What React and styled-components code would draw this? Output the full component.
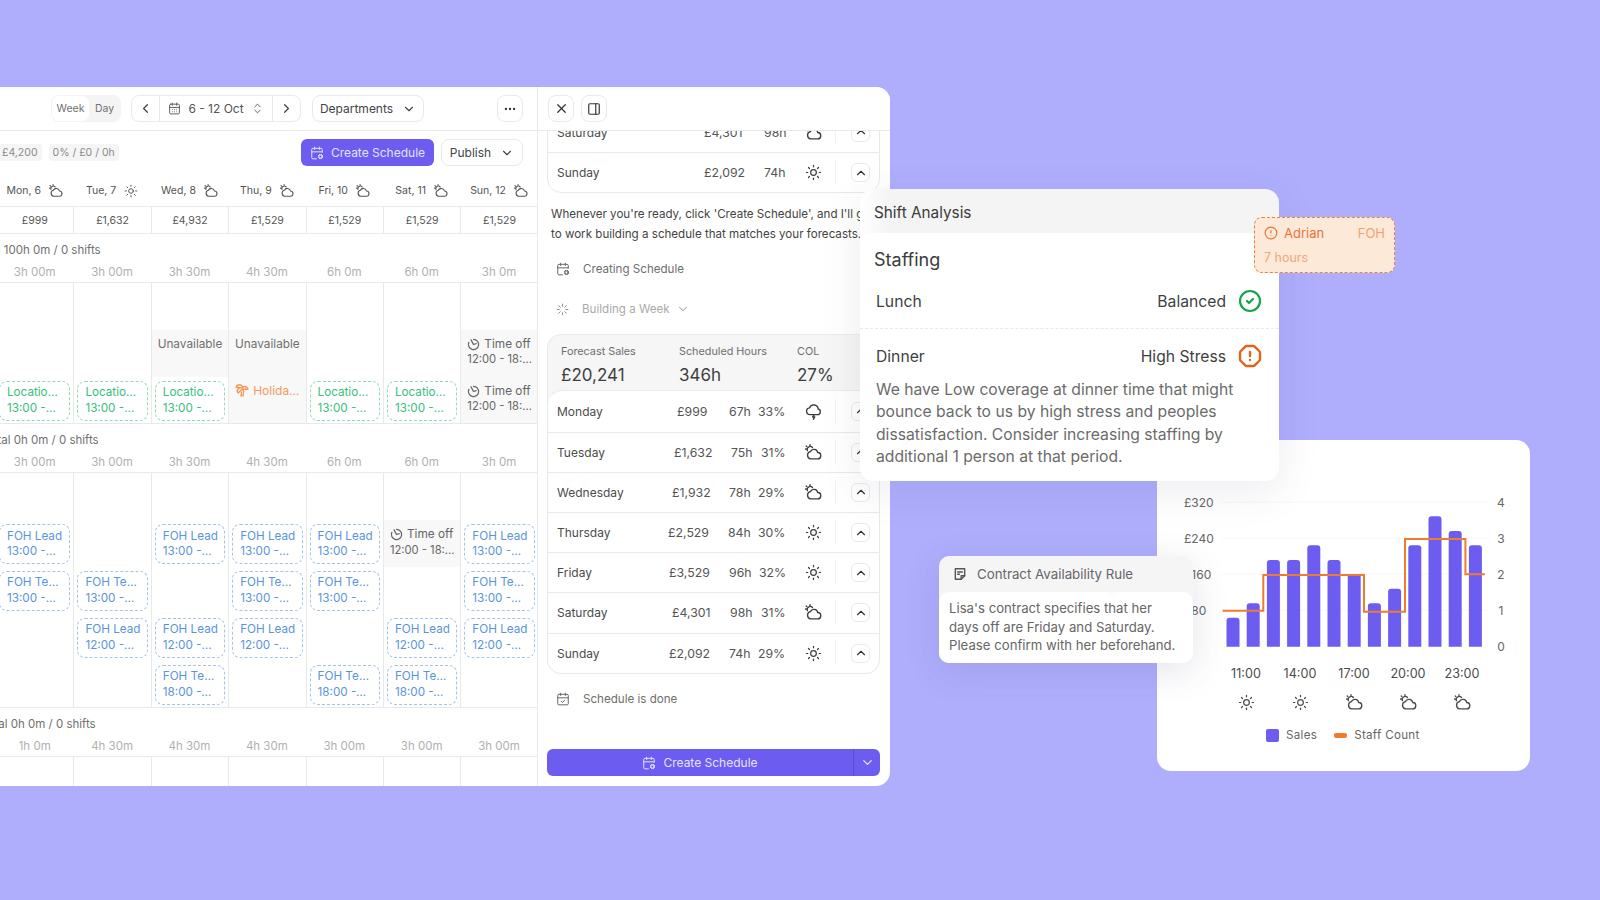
import React from "react";
import styled, { createGlobalStyle } from "styled-components";
import {
  Sun, TreePalm, ChevronUp, ChevronDown, ChevronLeft, ChevronRight,
  ChevronsUpDown, Ellipsis, X, PanelRight, CalendarDays, CalendarCheck, CalendarCog,
  CircleCheck, OctagonAlert, CircleAlert, Loader,
} from "lucide-react";

const GlobalStyle = createGlobalStyle`
  html, body { margin: 0; padding: 0; }
  body { font-family: Inter, "Liberation Sans", sans-serif; background: #aeaefd; }
`;

const PURPLE = "#6d5cf0";
const LINE = "#e9e9ea";

const Page = styled.div`
  position: relative;
  width: 1600px;
  height: 900px;
  overflow: hidden;
  background: #aeaefd;
`;

/* ---------- app window ---------- */
const AppWindow = styled.div`
  position: absolute;
  left: 0;
  top: 87px;
  width: 890px;
  height: 699px;
  display: flex;
  background: #fff;
  border-radius: 0 14px 14px 0;
  overflow: hidden;
`;

const SchedulePane = styled.div`
  width: 538px;
  flex: none;
  border-right: 1px solid ${LINE};
  box-sizing: border-box;
  overflow: hidden;
`;

const TopBar = styled.div`
  height: 44px;
  box-sizing: border-box;
  border-bottom: 1px solid ${LINE};
  display: flex;
  align-items: center;
  padding: 0 14px 0 51px;
  flex: none;
`;

const Segment = styled.div`
  display: flex;
  width: 70px;
  height: 27px;
  padding: 1px;
  box-sizing: border-box;
  background: #f4f4f5;
  border-radius: 8px;
  margin-right: 10px;
`;

const SegmentTab = styled.div`
  flex: ${(p) => (p.$active ? "0 0 37px" : "1")};
  display: flex;
  align-items: center;
  justify-content: center;
  font-size: 10.5px;
  color: #707070;
  background: ${(p) => (p.$active ? "#fff" : "transparent")};
  border-radius: 7px;
`;

const OutlineBox = styled.div`
  display: flex;
  align-items: center;
  height: 27px;
  box-sizing: border-box;
  border: 1px solid ${LINE};
  border-radius: 8px;
  background: #fff;
  color: #444;
  font-size: 12px;
`;

const DateNav = styled(OutlineBox)`
  width: 170px;
  margin-right: 11px;
`;

const NavArrow = styled.div`
  width: 27px;
  height: 100%;
  flex: none;
  display: flex;
  align-items: center;
  justify-content: center;
  color: #444;
`;

const DateLabel = styled.div`
  flex: 1;
  height: 100%;
  display: flex;
  align-items: center;
  justify-content: center;
  gap: 7px;
  border-left: 1px solid ${LINE};
  border-right: 1px solid ${LINE};
  color: #555;
`;

const SelectButton = styled(OutlineBox)`
  width: ${(p) => p.$w}px;
  justify-content: center;
  gap: 9px;
  flex: none;
`;

const IconButton = styled(OutlineBox)`
  width: 26px;
  flex: none;
  justify-content: center;
  margin-left: ${(p) => p.$ml || "0"};
  margin-right: ${(p) => p.$mr || "0"};
  color: #333;
`;

const ActionRow = styled.div`
  height: 41px;
  box-sizing: border-box;
  display: flex;
  align-items: flex-start;
  padding: 8px 14px 0 0;
`;

const Chip = styled.div`
  height: 17px;
  padding: 0 4px;
  margin: 5px 7px 0 0;
  display: flex;
  align-items: center;
  background: #f5f5f5;
  border-radius: 3px;
  font-size: 10.5px;
  color: #8b8b8b;
  &:first-child { margin-left: -2px; }
`;

const PrimaryButton = styled.div`
  margin-left: auto;
  width: 133px;
  height: 27px;
  display: flex;
  align-items: center;
  justify-content: center;
  gap: 7px;
  border-radius: 6px;
  background: ${PURPLE};
  color: #e6e1ff;
  font-size: 12px;
`;

const PublishButton = styled(SelectButton)`
  margin-left: 7px;
`;

const DayGrid = styled.div`
  width: 542px;
  margin-left: -4px;
  display: grid;
  grid-template-columns: repeat(7, 77.4px);
`;

const DayHeader = styled.div`
  height: 35px;
  padding-top: 3px;
  display: flex;
  align-items: center;
  justify-content: center;
  gap: 8px;
  font-size: 10.5px;
  color: #555;
  white-space: nowrap;
  box-sizing: border-box;
  border-bottom: 1px solid ${LINE};
`;

const TotalCell = styled.div`
  height: 27px;
  display: flex;
  align-items: center;
  justify-content: center;
  font-size: 10.5px;
  color: #555;
  box-sizing: border-box;
  border-bottom: 1px solid ${LINE};
  border-left: ${(p) => (p.$first ? "none" : `1px solid ${LINE}`)};
`;

const GroupLabel = styled.div`
  height: 27px;
  line-height: 32px;
  font-size: 11.5px;
  color: #707070;
  white-space: nowrap;
  margin-left: ${(p) => p.$offset}px;
`;

const HoursCell = styled.div`
  height: 22px;
  display: flex;
  align-items: center;
  justify-content: center;
  font-size: 11.5px;
  color: #b0b0b0;
  box-sizing: border-box;
  border-bottom: 1px solid ${LINE};
`;

const DayColumn = styled.div`
  display: flex;
  flex-direction: column;
  box-sizing: border-box;
  border-left: ${(p) => (p.$first ? "none" : `1px solid ${LINE}`)};
  border-bottom: 1px solid ${LINE};
  min-width: 0;
`;

const Slot = styled.div`
  height: 46.8px;
  flex: none;
  box-sizing: border-box;
  padding: ${(p) => (p.$card ? "4px 3px 3px" : "0")};
  background: ${(p) => (p.$grey ? "#f8f8f8" : "transparent")};
`;

const ShiftCard = styled.div`
  height: 40px;
  box-sizing: border-box;
  border: 1px dashed ${(p) => (p.$tone === "green" ? "#8fdcb3" : "#a3c3ee")};
  border-radius: 8px;
  padding: 3.5px 3px 0 7px;
  font-size: 11.7px;
  line-height: 15.5px;
  color: ${(p) => (p.$tone === "green" ? "#37c17b" : "#5a94df")};
`;

const Clip = styled.div`
  white-space: nowrap;
  overflow: hidden;
  text-overflow: ellipsis;
  max-width: ${(p) => p.$max || "none"};
`;

const Unavailable = styled.div`
  padding-top: 7px;
  text-align: center;
  font-size: 11.8px;
  color: #707070;
`;

const HolidayLine = styled.div`
  display: flex;
  align-items: center;
  gap: 4px;
  padding: 6px 5px 0 6px;
  font-size: 12px;
  color: #f59a5c;
  svg { flex: none; }
`;

const TimeOff = styled.div`
  padding: 7px 4px 0 6px;
  font-size: 11.8px;
  line-height: 15.5px;
  color: #666;
`;

const TimeOffTitle = styled.div`
  display: flex;
  align-items: center;
  gap: 4px;
`;

const TimeOffHours = styled(Clip)`
  font-size: 11.2px;
`;

/* ---------- assistant pane ---------- */
const AssistantPane = styled.div`
  flex: 1;
  display: flex;
  flex-direction: column;
  min-width: 0;
`;

const PaneTools = styled(TopBar)`
  padding: 0 0 0 10px;
  position: relative;
  z-index: 1;
  background: #fff;
`;

const PaneBody = styled.div`
  flex: 1;
  min-height: 0;
  padding: 0 10px 10px 9px;
  display: flex;
  flex-direction: column;
  overflow: hidden;
`;

const DayList = styled.div`
  margin-top: -20px;
  border: 1px solid ${LINE};
  border-radius: 0 0 14px 14px;
  flex: none;
`;

const DayRow = styled.div`
  height: 40.2px;
  box-sizing: border-box;
  display: flex;
  align-items: center;
  padding: 0 9px;
  font-size: 12.3px;
  color: #555;
  border-top: ${(p) => (p.$first ? "none" : `1px solid ${LINE}`)};
`;

const DayName = styled.div`
  flex: 1;
  font-size: 12px;
  color: #4c4c4c;
`;

const Value = styled.div`
  width: ${(p) => p.$w}px;
  padding-left: ${(p) => p.$pad || 0}px;
  box-sizing: border-box;
  flex: none;
  white-space: nowrap;
`;

const WeatherCell = styled.div`
  width: 28px;
  margin-left: ${(p) => p.$ml}px;
  flex: none;
  display: flex;
  justify-content: center;
  color: #3d3d3d;
`;

const RowDivider = styled.div`
  width: 1px;
  height: 24px;
  margin: 0 15px 0 8px;
  background: #f1f1f1;
  flex: none;
`;

const RowChevron = styled.div`
  width: 19px;
  height: 19px;
  flex: none;
  display: flex;
  align-items: center;
  justify-content: center;
  box-sizing: border-box;
  border: 1px solid ${LINE};
  border-radius: 6px;
  color: #333;
`;

const Message = styled.div`
  margin: 11px 0 5px 4px;
  width: 350px;
  font-size: 11.6px;
  line-height: 20px;
  color: #444;
  white-space: nowrap;
  flex: none;
`;

const StepRow = styled.div`
  height: 40px;
  flex: none;
  display: flex;
  align-items: center;
  gap: 13px;
  padding-left: 9px;
  font-size: 11.6px;
  color: ${(p) => (p.$faint ? "#aaa" : "#6f6f6f")};
  svg { color: ${(p) => (p.$faint ? "#888" : "#666")}; flex: none; }
`;

const StepChevron = styled.span`
  display: flex;
  margin-left: -7px;
`;

const ForecastPanel = styled.div`
  margin-top: 5px;
  flex: none;
  background: #f6f6f6;
  border: 1px solid ${LINE};
  border-radius: 14px;
  overflow: hidden;
`;

const ForecastHead = styled.div`
  height: 55px;
  display: grid;
  grid-template-columns: 118px 118px 1fr;
  padding: 9px 0 0 13px;
  box-sizing: border-box;
`;

const StatLabel = styled.div`
  font-size: 10.8px;
  line-height: 16px;
  color: #6e6e6e;
`;

const StatValue = styled.div`
  font-size: 17px;
  line-height: 26px;
  margin-top: 2px;
  color: #3f3f3f;
`;

const ForecastRows = styled.div`
  background: #fff;
  border: 1px solid ${LINE};
  border-width: 1px 0 0;
  border-radius: 14px;
`;

const DoneRow = styled(StepRow)`
  margin-top: 5px;
`;

const CreateBar = styled.div`
  margin-top: auto;
  height: 27px;
  flex: none;
  display: flex;
  border-radius: 6px;
  overflow: hidden;
  background: ${PURPLE};
  color: #e6e1ff;
  font-size: 12px;
`;

const CreateLabel = styled.div`
  flex: 1;
  display: flex;
  align-items: center;
  justify-content: center;
  gap: 7px;
`;

const CreateCaret = styled.div`
  width: 26px;
  display: flex;
  align-items: center;
  justify-content: center;
  border-left: 1px solid #5a4ad0;
`;

/* ---------- shift analysis ---------- */
const AnalysisCard = styled.div`
  position: absolute;
  left: 860px;
  top: 189px;
  width: 419px;
  height: 292px;
  z-index: 3;
  display: flex;
  flex-direction: column;
  background: linear-gradient(90deg, #fff 0, #f4f4f5 30px);
  border-radius: 14px;
  box-shadow: 0 10px 40px rgba(70, 70, 110, 0.1);
`;

const AnalysisTitle = styled.div`
  height: 44px;
  flex: none;
  display: flex;
  align-items: center;
  padding: 2px 0 0 14px;
  box-sizing: border-box;
  font-size: 15.3px;
  color: #3b3b3b;
`;

const AnalysisBody = styled.div`
  flex: 1;
  background: #fff;
  border-radius: 14px;
`;

const SectionTitle = styled.div`
  height: 46px;
  padding: 6px 14px 0;
  box-sizing: border-box;
  display: flex;
  align-items: center;
  font-size: 18px;
  color: #3b3b3b;
`;

const MealRow = styled.div`
  height: ${(p) => p.$h}px;
  display: flex;
  align-items: center;
  gap: 12px;
  padding: ${(p) => p.$pt || 0}px 17px ${(p) => p.$pb || 0}px 16px;
  box-sizing: border-box;
  font-size: 15.7px;
  color: #3f3f3f;
  border-bottom: ${(p) => (p.$dashed ? `1px dashed ${LINE}` : "none")};
  svg { flex: none; }
`;

const MealName = styled.div`
  flex: 1;
`;

const AnalysisText = styled.div`
  padding: 0 16px;
  font-size: 15.7px;
  line-height: 22.6px;
  color: #6b6b6b;
  white-space: nowrap;
`;

const AdrianTag = styled.div`
  position: absolute;
  left: 1254px;
  top: 217px;
  width: 141px;
  height: 56px;
  z-index: 4;
  box-sizing: border-box;
  padding: 6px 9px;
  background: #fde9d8;
  border: 1px dashed #ea8240;
  border-radius: 8px;
  font-size: 13px;
`;

const TagRow = styled.div`
  display: flex;
  align-items: center;
  gap: 6px;
  height: 18px;
  color: #e8743a;
`;

const TagRole = styled.div`
  margin-left: auto;
  color: #f0a476;
`;

const TagHours = styled.div`
  margin-top: 8px;
  font-size: 12.5px;
  color: #f0a87c;
`;

/* ---------- chart card ---------- */
const ChartCard = styled.div`
  position: absolute;
  left: 1157px;
  top: 440px;
  width: 373px;
  height: 331px;
  z-index: 1;
  padding-top: 50px;
  box-sizing: border-box;
  background: #fff;
  border-radius: 14px;
`;

const ChartSvg = styled.svg`
  display: block;
  font-family: Inter, "Liberation Sans", sans-serif;
`;

const TickRow = styled.div`
  display: flex;
  padding-left: 62px;
  margin-top: 5px;
`;

const Tick = styled.div`
  width: 54px;
  flex: none;
  display: flex;
  flex-direction: column;
  align-items: center;
  gap: 11px;
  font-size: 12.6px;
  line-height: 18px;
  color: #4a4a4a;
`;

const Legend = styled.div`
  display: flex;
  align-items: center;
  margin: 17px 0 0 109px;
  font-size: 11.6px;
  letter-spacing: 0.3px;
  color: #666;
`;

const SalesSwatch = styled.span`
  width: 13px;
  height: 13px;
  border-radius: 2px;
  background: ${PURPLE};
  margin-right: 7px;
`;

const StaffSwatch = styled.span`
  width: 13px;
  height: 5px;
  border-radius: 2px;
  background: #ee7b30;
  margin: 0 7px 0 17px;
`;

/* ---------- contract card ---------- */
const ContractCard = styled.div`
  position: absolute;
  left: 939px;
  top: 556px;
  width: 254px;
  height: 107px;
  z-index: 2;
  display: flex;
  flex-direction: column;
  background: #f5f5f6;
  border-radius: 10px;
  box-shadow: 0 8px 36px rgba(70, 70, 110, 0.14);
`;

const ContractTitle = styled.div`
  height: 36px;
  flex: none;
  display: flex;
  align-items: center;
  gap: 10px;
  padding: 0 0 0 14px;
  font-size: 13.3px;
  color: #666;
`;

const ContractBody = styled.div`
  flex: 1;
  background: #fff;
  border-radius: 10px;
  padding: 7px 0 0 10px;
  font-size: 13.2px;
  line-height: 18.7px;
  color: #666;
  white-space: nowrap;
`;

/* ---------- small drawings ---------- */
const SparkCalendar = ({ size = 14 }) => <CalendarCog size={size} strokeWidth={1.7} />;

const TimeOffIcon = () => (
  <svg width="13" height="13" viewBox="0 0 24 24" fill="none" stroke="currentColor" strokeWidth="2.3" strokeLinecap="round" strokeLinejoin="round">
    <path d="M12 2.5a9.5 9.5 0 1 1-8.6 5.5" />
    <path d="M7.5 3.5 12 12l5-1.5" />
  </svg>
);

const NoteIcon = () => (
  <svg width="14" height="14" viewBox="0 0 24 24" fill="none" stroke="#555" strokeWidth="2.4" strokeLinejoin="round" strokeLinecap="round">
    <path d="M4 3h16v12l-6 6H4z" />
    <path d="M14 21v-6h6" />
    <path d="M8 8.5h8M8 12.5h3" />
  </svg>
);

const PartlyCloudy = ({ size }) => (
  <svg width={size} height={size} viewBox="0 0 24 24" fill="none" stroke="currentColor" strokeWidth="1.9" strokeLinecap="round" strokeLinejoin="round">
    <path d="M8 21h9.5a4.5 4.5 0 0 0 .5-9 5.5 5.5 0 0 0-10.4-1.2A5.2 5.2 0 0 0 8 21z" />
    <path d="M3.4 9.5A4.3 4.3 0 0 1 10.6 5" />
    <path d="M7 1v1.2M1.8 2.8l.9.9M.8 7H2" />
  </svg>
);

const StormCloud = ({ size }) => (
  <svg width={size} height={size} viewBox="0 0 24 24" fill="none" stroke="currentColor" strokeWidth="1.9" strokeLinecap="round" strokeLinejoin="round">
    <path d="M7 16.5a4.8 4.8 0 0 1-.6-9.56 6.3 6.3 0 0 1 12.2 1.5 4.1 4.1 0 0 1-.8 8.06z" />
    <path d="M13 16.5l-2.2 3.2h3L11.8 23" />
  </svg>
);

const Weather = ({ kind, size = 17 }) => {
  if (kind === "sun") return <Sun size={size} strokeWidth={1.7} />;
  if (kind === "storm") return <StormCloud size={size} />;
  return <PartlyCloudy size={size} />;
};

/* ---------- data ---------- */
const days = [
  ["Mon, 6", "cloud", "£999"],
  ["Tue, 7", "sun", "£1,632"],
  ["Wed, 8", "cloud", "£4,932"],
  ["Thu, 9", "cloud", "£1,529"],
  ["Fri, 10", "cloud", "£1,529"],
  ["Sat, 11", "cloud", "£1,529"],
  ["Sun, 12", "cloud", "£1,529"],
];

const LOC = { type: "card", tone: "green", title: "Location Manager", limit: "52.5px", time: "13:00 -18:00" };
const LEAD = { type: "card", tone: "blue", title: "FOH Lead", time: "13:00 -18:00" };
const TEAM = { type: "card", tone: "blue", title: "FOH Team Member", limit: "52.5px", time: "13:00 -18:00" };
const LEAD12 = { ...LEAD, time: "12:00 -18:00" };
const TEAM18 = { ...TEAM, time: "18:00 -23:00" };
const OFF = { type: "off" };
const NA = { type: "na" };
const HOL = { type: "holiday" };
const E = null;

const groups = [
  {
    offset: -26,
    hours: ["3h 00m", "3h 00m", "3h 30m", "4h 30m", "6h 0m", "6h 0m", "3h 0m"],
    label: "Total 100h 0m / 0 shifts",
    columns: [
      [E, E, LOC], [E, E, LOC], [E, NA, LOC], [E, NA, HOL], [E, E, LOC], [E, E, LOC], [E, OFF, OFF],
    ],
  },
  {
    offset: -16,
    hours: ["3h 00m", "3h 00m", "3h 30m", "4h 30m", "6h 0m", "6h 0m", "3h 0m"],
    label: "Total 0h 0m / 0 shifts",
    columns: [
      [E, LEAD, TEAM, E, E],
      [E, E, TEAM, LEAD12, E],
      [E, LEAD, E, LEAD12, TEAM18],
      [E, LEAD, TEAM, LEAD12, E],
      [E, LEAD, TEAM, E, TEAM18],
      [E, OFF, E, LEAD12, TEAM18],
      [E, LEAD, TEAM, LEAD12, E],
    ],
  },
  {
    offset: -19,
    hours: ["1h 0m", "4h 30m", "4h 30m", "4h 30m", "3h 00m", "3h 00m", "3h 00m"],
    label: "Total 0h 0m / 0 shifts",
    columns: [[E], [E], [E], [E], [E], [E], [E]],
  },
];

const forecast = [
  ["Monday", "£999", "67h", "33%", "storm", 12, 10, 1],
  ["Tuesday", "£1,632", "75h", "31%", "cloud", 9, 12, 4],
  ["Wednesday", "£1,932", "78h", "29%", "cloud", 7, 10, 1],
  ["Thursday", "£2,529", "84h", "30%", "sun", 3, 9, 1],
  ["Friday", "£3,529", "96h", "32%", "sun", 4, 10, 2],
  ["Saturday", "£4,301", "98h", "31%", "cloud", 7, 11, 4],
  ["Sunday", "£2,092", "74h", "29%", "sun", 4, 10, 1],
];

const bars = [617.7, 603.3, 560, 560, 545.3, 560, 574.3, 603.3, 588.7, 545.3, 516.3, 531, 545.3];
const ticks = [["11:00", "sun"], ["14:00", "sun"], ["17:00", "cloud"], ["20:00", "cloud"], ["23:00", "cloud"]];

const SlotContent = ({ item, grey }) => {
  if (!item) return <Slot $grey={grey} />;
  if (item.type === "card") {
    return (
      <Slot $card $grey={grey}>
        <ShiftCard $tone={item.tone}>
          <Clip $max={item.limit}>{item.title}</Clip>
          <Clip $max="50px">{item.time}</Clip>
        </ShiftCard>
      </Slot>
    );
  }
  if (item.type === "na") return <Slot $grey><Unavailable>Unavailable</Unavailable></Slot>;
  if (item.type === "holiday") {
    return (
      <Slot $grey>
        <HolidayLine><TreePalm size={14} strokeWidth={2.4} /><Clip>Holiday leave</Clip></HolidayLine>
      </Slot>
    );
  }
  return (
    <Slot $grey>
      <TimeOff>
        <TimeOffTitle><TimeOffIcon />Time off</TimeOffTitle>
        <TimeOffHours>12:00 - 18:00</TimeOffHours>
      </TimeOff>
    </Slot>
  );
};

const ScheduleGroup = ({ group }) => (
  <>
    <GroupLabel $offset={group.offset}>{group.label}</GroupLabel>
    <DayGrid>
      {group.hours.map((h, i) => <HoursCell key={i}>{h}</HoursCell>)}
      {group.columns.map((col, i) => {
        const firstFilled = col.findIndex((s) => s && (s.type === "na" || s.type === "off"));
        const holidayCol = col.some((s) => s && s.type === "holiday");
        return (
          <DayColumn key={i} $first={i === 0}>
            {col.map((item, j) => (
              <SlotContent key={j} item={item} grey={holidayCol && firstFilled >= 0 && j >= firstFilled} />
            ))}
          </DayColumn>
        );
      })}
    </DayGrid>
  </>
);

const RowEnd = () => (
  <>
    <RowDivider />
    <RowChevron><ChevronUp size={14} strokeWidth={2} /></RowChevron>
  </>
);

export default function App() {
  return (
    <Page>
      <GlobalStyle />
      <AppWindow>
        <SchedulePane>
          <TopBar>
            <Segment>
              <SegmentTab $active>Week</SegmentTab>
              <SegmentTab>Day</SegmentTab>
            </Segment>
            <DateNav>
              <NavArrow><ChevronLeft size={15} /></NavArrow>
              <DateLabel>
                <CalendarDays size={13} strokeWidth={1.7} />
                6 - 12 Oct
                <ChevronsUpDown size={13} strokeWidth={1.7} />
              </DateLabel>
              <NavArrow><ChevronRight size={15} /></NavArrow>
            </DateNav>
            <SelectButton $w={112}>Departments<ChevronDown size={14} /></SelectButton>
            <IconButton $ml="auto"><Ellipsis size={14} /></IconButton>
          </TopBar>
          <ActionRow>
            <Chip>£4,200</Chip>
            <Chip>0% / £0 / 0h</Chip>
            <PrimaryButton><SparkCalendar />Create Schedule</PrimaryButton>
            <PublishButton $w={82}>Publish<ChevronDown size={14} /></PublishButton>
          </ActionRow>
          <DayGrid>
            {days.map((d) => (
              <DayHeader key={d[0]}>{d[0]}<Weather kind={d[1]} size={14} /></DayHeader>
            ))}
            {days.map((d, i) => <TotalCell key={d[0]} $first={i === 0}>{d[2]}</TotalCell>)}
          </DayGrid>
          {groups.map((g, i) => <ScheduleGroup key={i} group={g} />)}
        </SchedulePane>

        <AssistantPane>
          <PaneTools>
            <IconButton $mr="7px"><X size={15} /></IconButton>
            <IconButton><PanelRight size={14} /></IconButton>
          </PaneTools>
          <PaneBody>
            <DayList>
              <DayRow $first>
                <DayName>Saturday</DayName>
                <Value $w={54} $pad={9}>£4,301</Value>
                <Value $w={48} $pad={15}>98h</Value>
                <WeatherCell $ml={2}><Weather kind="cloud" /></WeatherCell>
                <RowEnd />
              </DayRow>
              <DayRow>
                <DayName>Sunday</DayName>
                <Value $w={54} $pad={9}>£2,092</Value>
                <Value $w={48} $pad={15}>74h</Value>
                <WeatherCell $ml={2}><Weather kind="sun" /></WeatherCell>
                <RowEnd />
              </DayRow>
            </DayList>
            <Message>
              Whenever you're ready, click 'Create Schedule', and I'll get
              <br />
              to work building a schedule that matches your forecasts.
            </Message>
            <StepRow><SparkCalendar />Creating Schedule</StepRow>
            <StepRow $faint>
              <Loader size={13} strokeWidth={1.7} />Building a Week
              <StepChevron><ChevronDown size={14} strokeWidth={1.6} /></StepChevron>
            </StepRow>
            <ForecastPanel>
              <ForecastHead>
                <div><StatLabel>Forecast Sales</StatLabel><StatValue>£20,241</StatValue></div>
                <div><StatLabel>Scheduled Hours</StatLabel><StatValue>346h</StatValue></div>
                <div><StatLabel>COL</StatLabel><StatValue>27%</StatValue></div>
              </ForecastHead>
              <ForecastRows>
                {forecast.map((r, i) => (
                  <DayRow key={r[0]} $first={i === 0}>
                    <DayName>{r[0]}</DayName>
                    <Value $w={54} $pad={r[5]}>{r[1]}</Value>
                    <Value $w={38} $pad={r[6]}>{r[2]}</Value>
                    <Value $w={28} $pad={r[7]}>{r[3]}</Value>
                    <WeatherCell $ml={14}><Weather kind={r[4]} /></WeatherCell>
                    <RowEnd />
                  </DayRow>
                ))}
              </ForecastRows>
            </ForecastPanel>
            <DoneRow><CalendarCheck size={14} strokeWidth={1.7} />Schedule is done</DoneRow>
            <CreateBar>
              <CreateLabel><SparkCalendar />Create Schedule</CreateLabel>
              <CreateCaret><ChevronDown size={15} /></CreateCaret>
            </CreateBar>
          </PaneBody>
        </AssistantPane>
      </AppWindow>

      <AnalysisCard>
        <AnalysisTitle>Shift Analysis</AnalysisTitle>
        <AnalysisBody>
          <SectionTitle>Staffing</SectionTitle>
          <MealRow $h={50} $pb={5} $dashed>
            <MealName>Lunch</MealName>
            Balanced
            <CircleCheck size={24} color="#16a34a" strokeWidth={2.2} />
          </MealRow>
          <MealRow $h={49.5} $pt={5}>
            <MealName>Dinner</MealName>
            High Stress
            <OctagonAlert size={24} color="#e0641c" strokeWidth={2.4} />
          </MealRow>
          <AnalysisText>
            We have Low coverage at dinner time that might
            <br />
            bounce back to us by high stress and peoples
            <br />
            dissatisfaction. Consider increasing staffing by
            <br />
            additional 1 person at that period.
          </AnalysisText>
        </AnalysisBody>
      </AnalysisCard>

      <AdrianTag>
        <TagRow>
          <CircleAlert size={14} strokeWidth={2} />
          Adrian
          <TagRole>FOH</TagRole>
        </TagRow>
        <TagHours>7 hours</TagHours>
      </AdrianTag>

      <ChartCard>
        <ChartSvg width="373" height="170" viewBox="1157 490 373 170">
          {[502, 538, 574, 610].map((y) => (
            <line key={y} x1="1222" x2="1488" y1={y} y2={y} stroke="#f6f6f6" />
          ))}
          {[["£320", 502], ["£240", 538], ["£160", 574], ["£80", 610]].map(([t, y]) => (
            <text key={t} x="1184" y={y + 4.5} fontSize="12" fill="#666">{t}</text>
          ))}
          {[["4", 502], ["3", 538], ["2", 574], ["1", 610], ["0", 646]].map(([t, y]) => (
            <text key={t} x="1501" y={y + 4.5} textAnchor="middle" fontSize="12" fill="#666">{t}</text>
          ))}
          {bars.map((top, i) => (
            <path
              key={i}
              d={`M${1226.5 + i * 20.2} 646.7V${top + 3}q0-3 3-3h7q3 0 3 3V646.7z`}
              fill={PURPLE}
            />
          ))}
          <path
            d="M1222.6 610.7H1263.3V575H1364V611.7H1405V539H1465.4V574.3H1484.8"
            fill="none"
            stroke="#ee7b30"
            strokeWidth="2"
          />
        </ChartSvg>
        <TickRow>
          {ticks.map(([t, k]) => (
            <Tick key={t}>{t}<Weather kind={k} size={17} /></Tick>
          ))}
        </TickRow>
        <Legend>
          <SalesSwatch />Sales
          <StaffSwatch />Staff Count
        </Legend>
      </ChartCard>

      <ContractCard>
        <ContractTitle><NoteIcon />Contract Availability Rule</ContractTitle>
        <ContractBody>
          Lisa's contract specifies that her
          <br />
          days off are Friday and Saturday.
          <br />
          Please confirm with her beforehand.
        </ContractBody>
      </ContractCard>
    </Page>
  );
}
